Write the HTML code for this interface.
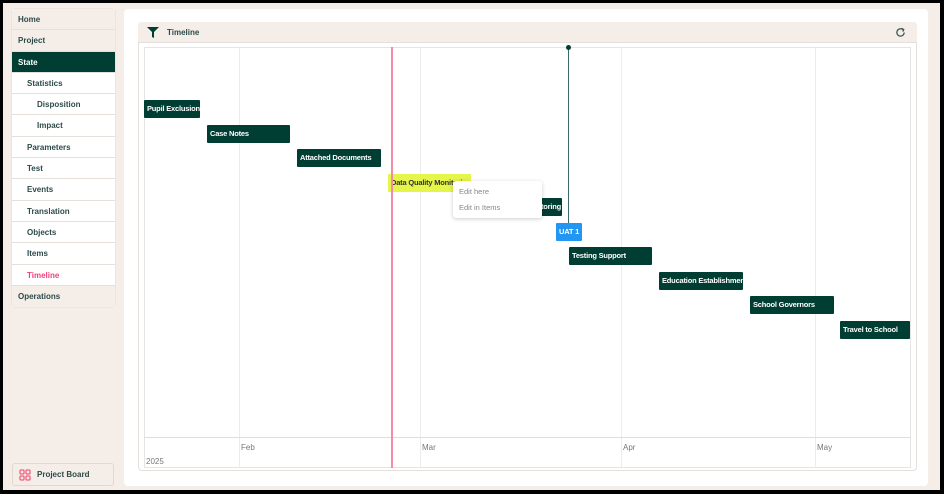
<!DOCTYPE html>
<html><head><style>
*{box-sizing:border-box;margin:0;padding:0}
body{width:944px;height:494px;overflow:hidden;background:#000;font-family:"Liberation Sans",sans-serif;position:relative}
.frame{position:absolute;left:3px;top:3px;width:937px;height:487px;background:#f4ede8}
.a{position:absolute}
.nav{position:absolute;left:12px;top:9px;width:103px;background:#fff;border-radius:3px;box-shadow:0 0 1px #bbb}
.nav div{height:21.3px;border-bottom:1px solid #e6e0dc;font-size:8px;font-weight:bold;color:#2d4a4a;line-height:21px;padding-left:6px}
.nav .top{background:#f4ede8}
.nav .sel{background:#003d33;color:#fff}
.nav .l1{padding-left:15px}
.nav .l2{padding-left:25px}
.bar{position:absolute;height:18px;background:#003d33;color:#fff;font-size:7.5px;font-weight:bold;line-height:18px;padding-left:3px;white-space:nowrap;overflow:hidden;border-radius:1px;letter-spacing:-0.2px}
.g{position:absolute;top:47px;height:420px;width:1px;background:#ececec}
.lbl{position:absolute;top:443px;font-size:8px;color:#777}
</style></head><body>
<div class="frame"></div>
<div class="nav">
<div class="top">Home</div><div class="top">Project</div><div class="sel">State</div>
<div class="l1">Statistics</div><div class="l2">Disposition</div><div class="l2">Impact</div>
<div class="l1">Parameters</div><div class="l1">Test</div><div class="l1">Events</div><div class="l1">Translation</div><div class="l1">Objects</div><div class="l1">Items</div><div class="l1" style="color:#f0407a">Timeline</div><div class="top" style="border:0">Operations</div>
</div>
<div class="a" style="left:12px;top:463px;width:102px;height:23px;background:#f4ede8;border:1px solid #e0d8d2;border-radius:3px;font-size:8px;font-weight:bold;color:#2d4a4a;line-height:21px;padding-left:24px">Project Board
<svg class="a" style="left:6px;top:5px" width="12" height="12" viewBox="0 0 12 12" fill="none" stroke="#f06080" stroke-width="1.3"><rect x="1" y="1" width="4" height="4" rx="1"/><rect x="7" y="1" width="4" height="4" rx="1"/><rect x="1" y="7" width="4" height="4" rx="1"/><rect x="7" y="7" width="4" height="4" rx="1"/></svg></div>
<div class="a" style="left:124px;top:9px;width:804px;height:477px;background:#fff;border-radius:4px"></div>
<div class="a" style="left:138px;top:22px;width:779px;height:449px;border:1px solid #e6e0dc;border-radius:4px;background:#fff"></div>
<div class="a" style="left:138px;top:22px;width:779px;height:21px;background:#f4ede8;border-radius:4px 4px 0 0;border-bottom:1px solid #e6e0dc"></div>
<svg class="a" style="left:147px;top:27px" width="12" height="11" viewBox="0 0 12 11"><path d="M0 0H12L7 5V11L5 10V5Z" fill="#003d33"/></svg>
<div class="a" style="left:167px;top:28px;font-size:8px;color:#2d4a4a;font-weight:bold">Timeline</div>
<svg class="a" style="left:895px;top:27px" width="11" height="11" viewBox="0 0 12 12" fill="none" stroke="#3a5555" stroke-width="1.4"><path d="M10 6A4 4 0 1 1 8.5 2.8"/><path d="M7 1.5L9.5 2.8 8.5 5" /></svg>
<div class="a" style="left:144px;top:47px;width:767px;height:421px;border:1px solid #e4e4e4"></div>
<div class="g" style="left:239px"></div><div class="g" style="left:420px"></div><div class="g" style="left:621px"></div><div class="g" style="left:815px"></div>
<div class="a" style="left:144px;top:437px;width:767px;height:1px;background:#ddd"></div>
<div class="lbl" style="left:241px">Feb</div><div class="lbl" style="left:422px">Mar</div><div class="lbl" style="left:623px">Apr</div><div class="lbl" style="left:817px">May</div>
<div class="lbl" style="left:146px;top:457px">2025</div>
<div class="a" style="left:568px;top:47px;width:1px;height:177px;background:#3a6a6a"></div>
<div class="a" style="left:566px;top:45px;width:5px;height:5px;border-radius:50%;background:#003d33"></div>
<div class="bar" style="left:144px;top:100px;width:56px">Pupil Exclusion</div>
<div class="bar" style="left:207px;top:125px;width:83px">Case Notes</div>
<div class="bar" style="left:297px;top:149px;width:84px">Attached Documents</div>
<div class="bar" style="left:388px;top:174px;width:83px;background:#e6f54a;color:#333">Data Quality Monitoring</div>
<div class="bar" style="left:478px;top:198px;width:84px;text-align:right;padding-right:1px">Monitoring</div>
<div class="bar" style="left:556px;top:223px;width:26px;background:#2196f3">UAT 1</div>
<div class="bar" style="left:569px;top:247px;width:83px">Testing Support</div>
<div class="bar" style="left:659px;top:272px;width:84px">Education Establishment</div>
<div class="bar" style="left:750px;top:296px;width:84px">School Governors</div>
<div class="bar" style="left:840px;top:321px;width:70px">Travel to School</div>
<div class="a" style="left:391px;top:47px;width:2px;height:421px;background:#f48aa8"></div>
<div class="a" style="left:453px;top:181px;width:89px;height:37px;background:#fff;border-radius:3px;box-shadow:0 1px 4px rgba(0,0,0,.2);font-size:7.5px;color:#888">
<div class="a" style="left:6px;top:6px">Edit here</div><div class="a" style="left:6px;top:22px">Edit in Items</div></div>
</body></html>
